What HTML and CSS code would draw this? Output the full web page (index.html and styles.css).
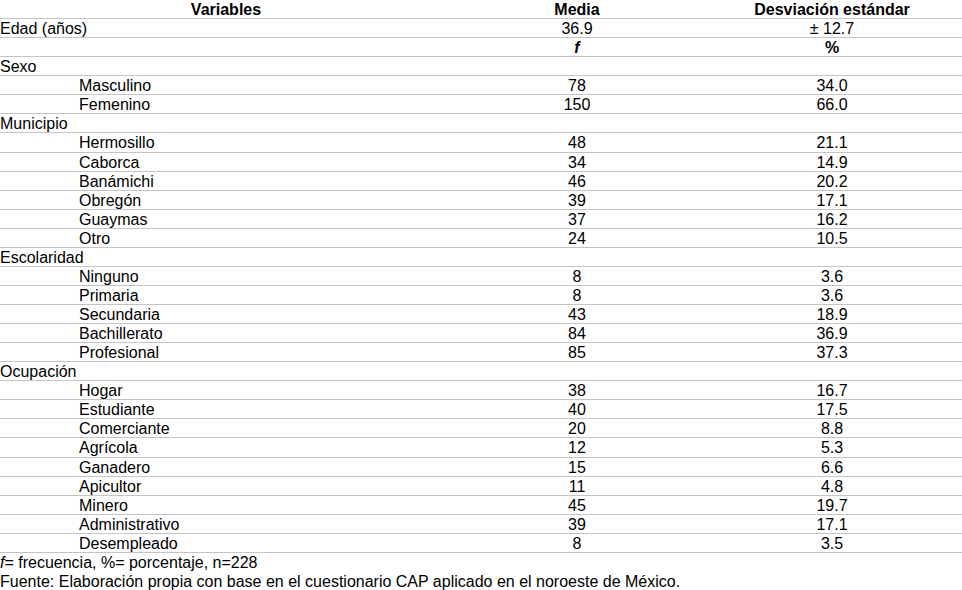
FILE: index.html
```html
<!DOCTYPE html>
<html lang="es">
<head>
<meta charset="utf-8">
<title>Tabla</title>
<link rel="stylesheet" href="styles.css">
</head>
<body>
<div class="table">
  <div class="row head"><div class="c1 center">Variables</div><div class="c2">Media</div><div class="c3">Desviación estándar</div></div>
  <div class="row"><div class="c1">Edad (años)</div><div class="c2">36.9</div><div class="c3">± 12.7</div></div>
  <div class="row"><div class="c1"></div><div class="c2 b"><i>f</i></div><div class="c3 b">%</div></div>
  <div class="row"><div class="c1">Sexo</div><div class="c2"></div><div class="c3"></div></div>
  <div class="row"><div class="c1 sub">Masculino</div><div class="c2">78</div><div class="c3">34.0</div></div>
  <div class="row"><div class="c1 sub">Femenino</div><div class="c2">150</div><div class="c3">66.0</div></div>
  <div class="row"><div class="c1">Municipio</div><div class="c2"></div><div class="c3"></div></div>
  <div class="row"><div class="c1 sub">Hermosillo</div><div class="c2">48</div><div class="c3">21.1</div></div>
  <div class="row"><div class="c1 sub">Caborca</div><div class="c2">34</div><div class="c3">14.9</div></div>
  <div class="row"><div class="c1 sub">Banámichi</div><div class="c2">46</div><div class="c3">20.2</div></div>
  <div class="row"><div class="c1 sub">Obregón</div><div class="c2">39</div><div class="c3">17.1</div></div>
  <div class="row"><div class="c1 sub">Guaymas</div><div class="c2">37</div><div class="c3">16.2</div></div>
  <div class="row"><div class="c1 sub">Otro</div><div class="c2">24</div><div class="c3">10.5</div></div>
  <div class="row"><div class="c1">Escolaridad</div><div class="c2"></div><div class="c3"></div></div>
  <div class="row"><div class="c1 sub">Ninguno</div><div class="c2">8</div><div class="c3">3.6</div></div>
  <div class="row"><div class="c1 sub">Primaria</div><div class="c2">8</div><div class="c3">3.6</div></div>
  <div class="row"><div class="c1 sub">Secundaria</div><div class="c2">43</div><div class="c3">18.9</div></div>
  <div class="row"><div class="c1 sub">Bachillerato</div><div class="c2">84</div><div class="c3">36.9</div></div>
  <div class="row"><div class="c1 sub">Profesional</div><div class="c2">85</div><div class="c3">37.3</div></div>
  <div class="row"><div class="c1">Ocupación</div><div class="c2"></div><div class="c3"></div></div>
  <div class="row"><div class="c1 sub">Hogar</div><div class="c2">38</div><div class="c3">16.7</div></div>
  <div class="row"><div class="c1 sub">Estudiante</div><div class="c2">40</div><div class="c3">17.5</div></div>
  <div class="row"><div class="c1 sub">Comerciante</div><div class="c2">20</div><div class="c3">8.8</div></div>
  <div class="row"><div class="c1 sub">Agrícola</div><div class="c2">12</div><div class="c3">5.3</div></div>
  <div class="row"><div class="c1 sub">Ganadero</div><div class="c2">15</div><div class="c3">6.6</div></div>
  <div class="row"><div class="c1 sub">Apicultor</div><div class="c2">11</div><div class="c3">4.8</div></div>
  <div class="row"><div class="c1 sub">Minero</div><div class="c2">45</div><div class="c3">19.7</div></div>
  <div class="row"><div class="c1 sub">Administrativo</div><div class="c2">39</div><div class="c3">17.1</div></div>
  <div class="row"><div class="c1 sub">Desempleado</div><div class="c2">8</div><div class="c3">3.5</div></div>
</div>
<div class="notes">
  <p><i>f</i>= frecuencia, %= porcentaje, n=228</p>
  <p>Fuente: Elaboración propia con base en el cuestionario CAP aplicado en el noroeste de México.</p>
</div>
</body>
</html>
```
FILE: styles.css
```css
html, body {
  margin: 0;
  padding: 0;
  background: #ffffff;
}
body {
  font-family: "Liberation Sans", Arial, sans-serif;
  font-size: 16px;
  color: #000000;
  width: 962px;
  overflow: hidden;
}
.table {
  border-top: 1px solid #c4c4c4;
  margin-top: -1px;
}
.row {
  display: grid;
  grid-template-columns: 452px 250px 260px;
  height: 19.07px;
  box-sizing: border-box;
  border-bottom: 1px solid #c4c4c4;
  line-height: 19px;
  white-space: nowrap;
}
.row > div {
  overflow: visible;
}
.c1 {
  text-align: left;
}
.c1.center {
  text-align: center;
}
.c2, .c3 {
  text-align: center;
}
.sub {
  padding-left: 79px;
}
.head, .b {
  font-weight: bold;
}
.notes {
  padding-top: 0;
}
.notes p {
  margin: 0;
  line-height: 19px;
  white-space: nowrap;
}
```
